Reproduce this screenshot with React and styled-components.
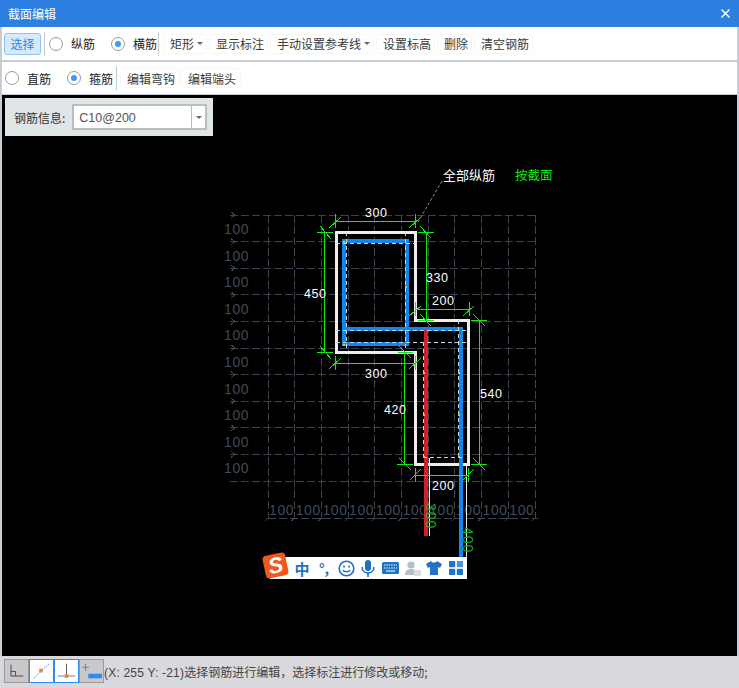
import React from "react";
import styled, { createGlobalStyle } from "styled-components";

const GlobalStyle = createGlobalStyle`
  html, body { margin: 0; padding: 0; background: #c8ccd4; }
  body { font-family: "Noto Sans CJK SC", "Liberation Sans", sans-serif; }
`;

const Window = styled.div`
  width: 739px;
  height: 688px;
  box-sizing: border-box;
  padding: 0 2px;
  display: flex;
  flex-direction: column;
  background: #c8ccd4;
  overflow: hidden;
`;

const TitleBar = styled.div`
  height: 27px;
  margin: 0 -2px;
  padding: 0 8px;
  flex: none;
  display: flex;
  align-items: center;
  justify-content: space-between;
  background: #2d7fe0;
  color: #fff;
  font-size: 12px;
`;

const CloseIcon = styled.svg`
  width: 9px;
  height: 9px;
  margin-right: 1px;
`;

const Toolbar = styled.div`
  height: ${(p) => p.$height}px;
  margin-bottom: ${(p) => p.$gap}px;
  padding: 0 0 0 ${(p) => p.$left}px;
  flex: none;
  display: flex;
  align-items: center;
  background: #fff;
  font-size: 12px;
  color: #333;
`;

const SelectButton = styled.div`
  width: 37px;
  height: 22px;
  box-sizing: border-box;
  display: flex;
  align-items: center;
  justify-content: center;
  background: #d6eaff;
  border: 1px solid #8fc3f5;
  border-radius: 3px;
  color: #2f86e0;
`;

const Separator = styled.div`
  width: 1px;
  height: 24px;
  margin: 0 ${(p) => p.$right}px 0 ${(p) => p.$left}px;
  background: #c9c9c9;
`;

const RadioItem = styled.label`
  width: ${(p) => p.$width}px;
  display: flex;
  align-items: center;
  color: #222;
`;

const RadioDot = styled.span`
  width: 14px;
  height: 14px;
  margin-right: 8px;
  flex: none;
  box-sizing: border-box;
  border: 1px solid #9a9a9a;
  border-radius: 50%;
  display: flex;
  align-items: center;
  justify-content: center;
  background: #fff;

  &::after {
    content: "";
    width: 6px;
    height: 6px;
    border-radius: 50%;
    background: ${(p) => (p.$checked ? "#3f97f5" : "transparent")};
  }
`;

const ToolButton = styled.div`
  width: ${(p) => p.$width}px;
  height: 20px;
  margin-right: ${(p) => p.$gap ?? 2}px;
  padding-left: 6px;
  box-sizing: border-box;
  display: flex;
  align-items: center;
  justify-content: flex-start;
  flex: none;
  border: 1px solid #f6f6f6;
  border-radius: 3px;
  color: #3a3a3a;
`;

const Caret = styled.span`
  margin-left: ${(p) => (p.$centered ? 0 : "auto")};
  margin-right: ${(p) => p.$right}px;
  width: 0;
  height: 0;
  border-left: 3px solid transparent;
  border-right: 3px solid transparent;
  border-top: 3px solid #666;
`;

const Canvas = styled.div`
  position: relative;
  flex: 1;
  background: #000;
  overflow: hidden;
`;

const Drawing = styled.svg`
  display: block;
  width: 100%;
  height: 100%;
`;

const InfoPanel = styled.div`
  position: absolute;
  left: 3px;
  top: 3px;
  width: 208px;
  height: 38px;
  box-sizing: border-box;
  padding-left: 9px;
  display: flex;
  align-items: center;
  background: #e0e6e8;
  font-size: 12px;
  color: #333;
`;

const Combo = styled.div`
  width: 135px;
  height: 26px;
  margin-left: 7px;
  box-sizing: border-box;
  display: flex;
  align-items: center;
  border: 2px solid #bdbdbd;
  background: #fff;
`;

const ComboValue = styled.div`
  flex: 1;
  height: 100%;
  box-sizing: border-box;
  padding: 2px 0 0 5px;
  display: flex;
  align-items: center;
  border-right: 1px solid #bdbdbd;
  font-family: "Liberation Sans", sans-serif;
  font-size: 12.5px;
  color: #555;
`;

const ComboArrow = styled.div`
  width: 13px;
  display: flex;
  justify-content: center;
`;

const ImeBar = styled.div`
  position: absolute;
  left: 268px;
  top: 462px;
  width: 197px;
  height: 22px;
  padding-left: 21px;
  box-sizing: border-box;
  display: flex;
  align-items: center;
  background: #fff;
  color: #1f72c4;
`;

const ImeLogo = styled.div`
  position: absolute;
  left: -6px;
  top: -3px;
  width: 23px;
  height: 23px;
  display: flex;
  align-items: center;
  justify-content: center;
  border-radius: 4px;
  background: #f0591e;
  transform: rotate(-12deg);
  font: italic bold 22px "Liberation Sans", sans-serif;
  color: #fff;
`;

const ImeSlot = styled.div`
  width: 22px;
  height: 22px;
  flex: none;
  display: flex;
  align-items: center;
  justify-content: center;
  font-size: ${(p) => p.$size || 15}px;
  font-weight: 700;
  line-height: 1;
`;

const StatusBar = styled.div`
  height: 32px;
  margin: 0 -2px;
  padding: 3px 0 5px 4px;
  box-sizing: border-box;
  flex: none;
  display: flex;
  align-items: center;
  background: #d9d9dd;
  font-size: 12px;
  color: #444;
`;

const StatusButton = styled.div`
  width: 25px;
  height: 24px;
  box-sizing: border-box;
  flex: none;
  border: 1px solid ${(p) => (p.$active ? "#2d8cf0" : "#9a9a9a")};
  background: ${(p) => (p.$active ? "#fff" : "#c9c9cc")};

  svg { display: block; width: 100%; height: 100%; }
`;

const StatusText = styled.span`
  white-space: nowrap;
`;

const Coords = styled.span`
  font-family: "Liberation Sans", sans-serif;
  letter-spacing: 0.2px;
`;

const gridY = Array.from({ length: 11 }, (_, i) => 215 + i * 26.6);
const gridX = Array.from({ length: 11 }, (_, i) => 268 + i * 26.7);
const leftLabels = gridY.slice(0, 10);
const bottomLabels = gridX.slice(0, 10);

const whiteOutline = "336,232 415,232 415,320 468,320 468,464 415,464 415,352 336,352";

// every dimension line: main line, tick marks and slashes, in page coordinates
const greenSegments = [
  [335, 221, 416, 221], [335, 214, 335, 228], [329, 228, 341, 217],
  [415, 214, 415, 228], [409, 228, 421, 217],
  [324, 232, 324, 352], [317, 232, 333, 232], [320, 226, 331, 239], [317, 352, 333, 352], [320, 346, 331, 359],
  [426, 232, 426, 320], [418, 232, 434, 232], [420, 226, 431, 238], [418, 320, 434, 320], [420, 314, 431, 326],
  [415, 309, 469, 309], [415, 302, 415, 316], [409, 316, 421, 306], [469, 302, 469, 316], [463, 316, 474, 306],
  [479, 320, 479, 464], [471, 320, 487, 320], [473, 314, 485, 326], [471, 464, 487, 464], [473, 458, 485, 470],
  [404, 352, 404, 464], [398, 352, 413, 352], [399, 346, 411, 358], [397, 464, 413, 464], [399, 458, 411, 470],
  [335, 363, 416, 363], [335, 356, 335, 370], [329, 369, 341, 358], [415, 356, 415, 370], [409, 369, 421, 358],
  [415, 475, 468, 475], [415, 468, 415, 482], [410, 480, 421, 469], [468, 468, 468, 482], [463, 480, 474, 469],
];

const dashedSegments = [
  [346, 232, 346, 352], [336, 243, 415, 243], [336, 330, 468, 330], [336, 342, 468, 342],
  [405, 232, 405, 352], [423, 342, 423, 457], [458, 320, 458, 457], [423, 457, 465, 457],
];

const dimLabels = [
  ["300", 365, 217], ["450", 304, 298], ["330", 426, 282], ["200", 432, 305],
  ["300", 365, 378], ["420", 384, 414], ["540", 480, 398], ["200", 432, 490],
];

const yellowDots = [[343, 241], [343, 344], [405, 286], [423, 372], [423, 414], [423, 456], [458, 372], [458, 414], [458, 456]];

const CanvasDrawing = () => (
  <Drawing viewBox="2 95 735 561">
    <g stroke="#39424e" strokeDasharray="8 3" shapeRendering="crispEdges">
      {gridY.map((y) => <line key={y} x1="230" y1={y} x2="536" y2={y} />)}
      {gridX.map((x) => <line key={x} x1={x} y1="215" x2={x} y2="518" />)}
      <line x1="268" y1="518" x2="536" y2="518" />
    </g>
    <g stroke="#39424e" fill="none" shapeRendering="crispEdges">
      {gridY.slice(0, 10).map((y) => <path key={y} d={`M231 ${y - 3}l4 3-4 3`} />)}
      {gridX.map((x) => <path key={x} d={`M${x - 3} 521l3-3 3 0`} />)}
    </g>
    <g fill="#3f4a58" fontFamily="Liberation Sans" fontSize="14" letterSpacing="0.6">
      {leftLabels.map((y) => <text key={y} x="224" y={y + 19}>100</text>)}
      {bottomLabels.map((x) => <text key={x} x={x + 1} y="515">100</text>)}
    </g>
    <polygon points={whiteOutline} fill="none" stroke="#eee" strokeWidth="3" shapeRendering="crispEdges" />
    <path d="M429.5 458V536M466.5 466V557" stroke="#eee" strokeWidth="1.5" fill="none" shapeRendering="crispEdges" />
    <path d="M344 241H407V344H344ZM344 328.5H460.5V557" fill="none" stroke="#0f86f0" strokeWidth="4" shapeRendering="crispEdges" />
    <rect x="424" y="330" width="4" height="206" fill="#d0202a" />
    <g stroke="#bcd8f5" strokeDasharray="4 3" shapeRendering="crispEdges">
      {dashedSegments.map((s) => <line key={s.join()} x1={s[0]} y1={s[1]} x2={s[2]} y2={s[3]} />)}
    </g>
    <g fill="#f0c020">
      {yellowDots.map((d) => <rect key={d.join()} x={d[0]} y={d[1]} width="2" height="2" />)}
    </g>
    <line x1="442" y1="181" x2="418" y2="222" stroke="#8a8a8a" strokeDasharray="3 2" />
    <g stroke="#12e812" shapeRendering="crispEdges">
      {greenSegments.map((s) => <line key={s.join()} x1={s[0]} y1={s[1]} x2={s[2]} y2={s[3]} />)}
    </g>
    <g fill="#fff" fontFamily="Liberation Sans" fontSize="12.5" letterSpacing="0.5">
      {dimLabels.map(([t, x, y]) => <text key={`${x}-${y}`} x={x} y={y}>{t}</text>)}
    </g>
    <text x="443" y="180" fill="#fff" fontSize="13" fontFamily="Noto Sans CJK SC">全部纵筋</text>
    <text x="515" y="180" fill="#12e812" fontSize="12.5" fontFamily="Noto Sans CJK SC">按截面</text>
    <g fill="#16a816" fontFamily="Liberation Sans" fontSize="14" letterSpacing="1">
      <text transform="translate(426 503) rotate(90)">300</text>
      <text transform="translate(463 527) rotate(90)">400</text>
    </g>
  </Drawing>
);

const ImeIcons = () => (
  <>
    <ImeSlot>中</ImeSlot>
    <ImeSlot $size={14}>°,</ImeSlot>
    <ImeSlot>
      <svg width="17" height="17" viewBox="0 0 17 17" fill="none" stroke="#1f72c4" strokeWidth="1.6">
        <circle cx="8.5" cy="8.5" r="7.3" />
        <path d="M5 10c1 2.4 6 2.4 7 0" />
        <path d="M6 5.5v2M11 5.5v2" />
      </svg>
    </ImeSlot>
    <ImeSlot>
      <svg width="14" height="17" viewBox="0 0 14 17" fill="#1f72c4">
        <rect x="4" y="0" width="6" height="11" rx="3" />
        <path d="M1 7c0 8 12 8 12 0" fill="none" stroke="#1f72c4" strokeWidth="1.6" />
        <rect x="6.2" y="13" width="1.6" height="4" />
      </svg>
    </ImeSlot>
    <ImeSlot>
      <svg width="17" height="12" viewBox="0 0 17 12">
        <rect width="17" height="12" rx="1.5" fill="#1f72c4" />
        <path d="M2 3h13M2 6h13" stroke="#fff" strokeDasharray="1.4 1" />
        <path d="M4 9h9" stroke="#fff" />
      </svg>
    </ImeSlot>
    <ImeSlot>
      <svg width="17" height="17" viewBox="0 0 17 17" fill="#b4bfca">
        <circle cx="7" cy="5" r="3.6" />
        <path d="M1 15c0-4 2-6 6-6s4 1 4 2v4z" />
        <rect x="10" y="10" width="7" height="6" fill="#d8dde2" />
      </svg>
    </ImeSlot>
    <ImeSlot>
      <svg width="16" height="14" viewBox="0 0 16 14" fill="#1f72c4">
        <path d="M5 0 L0 3 L2 7 L4 6 V14 H12 V6 L14 7 L16 3 L11 0 C10 2 6 2 5 0Z" />
      </svg>
    </ImeSlot>
    <ImeSlot>
      <svg width="14" height="14" viewBox="0 0 14 14" fill="#1f72c4">
        <rect width="6.2" height="6.2" />
        <rect x="7.8" width="6.2" height="6.2" fill="#4f93d6" />
        <rect y="7.8" width="6.2" height="6.2" />
        <rect x="7.8" y="7.8" width="6.2" height="6.2" />
      </svg>
    </ImeSlot>
  </>
);

export default function App() {
  return (
    <>
      <GlobalStyle />
      <Window>
        <TitleBar>
          截面编辑
          <CloseIcon viewBox="0 0 9 9">
            <path d="M0.5 0.5L8.5 8.5M8.5 0.5L0.5 8.5" stroke="#fff" strokeWidth="1.4" />
          </CloseIcon>
        </TitleBar>
        <Toolbar $height={33} $gap={2} $left={2}>
          <SelectButton>选择</SelectButton>
          <Separator $left={3} $right={4} />
          <RadioItem $width={62}><RadioDot />纵筋</RadioItem>
          <RadioItem $width={47}><RadioDot $checked />横筋</RadioItem>
          <Separator $left={0} $right={4} />
          <ToolButton $width={44}>矩形<Caret $right={3} /></ToolButton>
          <ToolButton $width={59}>显示标注</ToolButton>
          <ToolButton $width={104}>手动设置参考线<Caret $right={3} /></ToolButton>
          <ToolButton $width={59}>设置标高</ToolButton>
          <ToolButton $width={35}>删除</ToolButton>
          <ToolButton $width={59}>清空钢筋</ToolButton>
        </Toolbar>
        <Toolbar $height={32} $gap={1} $left={3}>
          <RadioItem $width={62}><RadioDot />直筋</RadioItem>
          <RadioItem $width={49}><RadioDot $checked />箍筋</RadioItem>
          <Separator $left={0} $right={3} />
          <ToolButton $width={60} $gap={1}>编辑弯钩</ToolButton>
          <ToolButton $width={60}>编辑端头</ToolButton>
        </Toolbar>
        <Canvas>
          <CanvasDrawing />
          <InfoPanel>
            钢筋信息:
            <Combo>
              <ComboValue>C10@200</ComboValue>
              <ComboArrow><Caret $right={0} $centered /></ComboArrow>
            </Combo>
          </InfoPanel>
          <ImeBar>
            <ImeLogo>S</ImeLogo>
            <ImeIcons />
          </ImeBar>
        </Canvas>
        <StatusBar>
          <StatusButton>
            <svg viewBox="0 0 25 24" fill="none" stroke="#444">
              <path d="M6.5 5V17.5H20" />
              <path d="M6.5 12.5H11.5V17.5" />
            </svg>
          </StatusButton>
          <StatusButton $active>
            <svg viewBox="0 0 25 24">
              <path d="M4 20L21 4" stroke="#4a90e2" strokeDasharray="2 1" />
              <rect x="10" y="9.5" width="4" height="4" fill="#f08a24" />
            </svg>
          </StatusButton>
          <StatusButton $active>
            <svg viewBox="0 0 25 24">
              <path d="M3 17.5H22" stroke="#4a7fb8" />
              <path d="M12.5 4V17" stroke="#555" />
              <rect x="10.5" y="15.5" width="4" height="4" fill="#f08a24" />
            </svg>
          </StatusButton>
          <StatusButton>
            <svg viewBox="0 0 25 24">
              <path d="M2.5 8H10M6 4V12" stroke="#2d8cf0" />
              <rect x="9" y="15" width="15" height="5" fill="#2d8cf0" />
            </svg>
          </StatusButton>
          <StatusText>
            <Coords>(X: 255 Y: -21)</Coords>选择钢筋进行编辑，选择标注进行修改或移动;
          </StatusText>
        </StatusBar>
      </Window>
    </>
  );
}
